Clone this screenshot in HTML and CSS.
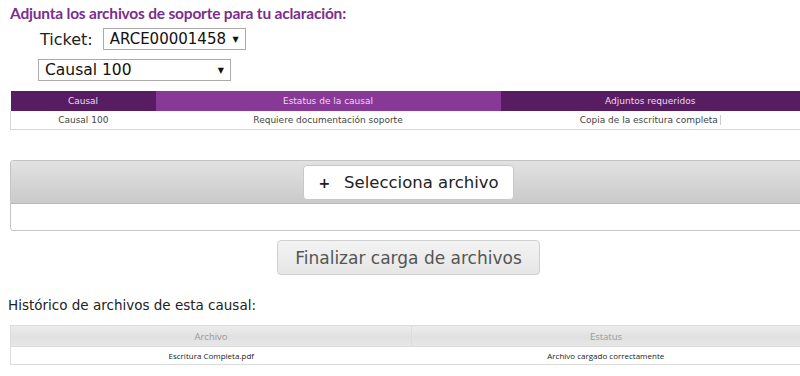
FILE: index.html
```html
<!DOCTYPE HTML>
<html>

<head>
    <meta charset="UTF-8">
    <meta name="viewport" content="width=device-width, initial-scale=1.0">
    <title>Adjuntar archivos</title>
    <link rel="stylesheet" href="styles.css">
</head>

<body>
    <div class="container">
        <h1 class="title">Adjunta los archivos de soporte para tu aclaración:</h1>

        <div class="ticket-row">
            <label>Ticket:</label>
            <div class="select select--ticket">ARCE00001458 <span class="arrow">▼</span></div>
        </div>
        <div class="select select--causal">Causal 100 <span class="arrow">▼</span></div>

        <table class="grid grid--causal">
            <tr>
                <th class="dark col-causal">Causal</th>
                <th class="light col-estatus">Estatus de la causal</th>
                <th class="dark">Adjuntos requeridos</th>
            </tr>
            <tr>
                <td>Causal 100</td>
                <td>Requiere documentación soporte</td>
                <td>Copia de la escritura completa<span class="cursor"></span></td>
            </tr>
        </table>

        <div class="upload">
            <div class="upload__bar">
                <button class="btn btn--select"><span class="plus">+</span>Selecciona archivo</button>
            </div>
            <div class="upload__list"></div>
        </div>

        <div class="finish">
            <button class="btn btn--finish">Finalizar carga de archivos</button>
        </div>

        <p class="history">Histórico de archivos de esta causal:</p>

        <table class="grid grid--history">
            <tr>
                <th class="col-archivo">Archivo</th>
                <th>Estatus</th>
            </tr>
            <tr>
                <td>Escritura Completa.pdf</td>
                <td>Archivo cargado correctamente</td>
            </tr>
        </table>
    </div>
</body>

</html>
```

FILE: styles.css
```css
body {
    margin: 0;
    font-family: "DejaVu Sans", Verdana, sans-serif;
    color: #333;
    background: #fff;
    overflow: hidden;
}

.container {
    padding-left: 10px;
    width: 800px;
}

.title {
    margin: 0;
    padding-top: 4px;
    font-family: Lato, sans-serif;
    font-weight: 700;
    font-size: 15.5px;
    color: #7b2e8e;
    letter-spacing: -0.2px;
    height: 24px;
}

.ticket-row {
    display: flex;
    align-items: center;
    margin-left: 30px;
    height: 22px;
}

.ticket-row label {
    font-size: 16px;
    color: #222;
    margin-right: 10px;
}

.select {
    display: flex;
    align-items: center;
    justify-content: space-between;
    box-sizing: border-box;
    border: 1px solid #aaa;
    height: 22px;
    padding: 0 6px 0 6px;
    font-size: 15px;
    color: #111;
}

.select .arrow {
    font-size: 8px;
    margin-left: 6px;
}

.select--ticket {
    width: 143px;
}

.select--causal {
    width: 193px;
    margin: 9px 0 0 28px;
    font-size: 15.5px;
}

.grid {
    border-collapse: collapse;
    width: 790px;
    table-layout: fixed;
    font-size: 9px;
}

.grid th,
.grid td {
    text-align: center;
    padding: 0;
    font-weight: normal;
}

.grid--causal {
    margin-top: 10px;
}

.grid--causal th {
    height: 20px;
    color: #e9dcec;
}

.grid--causal .dark {
    background: #581c62;
}

.grid--causal .light {
    background: #883897;
}

.col-causal {
    width: 145px;
}

.col-estatus {
    width: 345px;
}

.grid--causal td {
    height: 18px;
    border-bottom: 1px solid #d6d6d6;
    color: #444;
}

.grid--causal tr td:first-child {
    border-left: 1px solid #d6d6d6;
}

.cursor {
    display: inline-block;
    width: 1px;
    height: 10px;
    background: #ccc;
    margin-left: 2px;
    vertical-align: middle;
}

.upload {
    margin-top: 30px;
    border: 1px solid #c4c4c4;
    border-right: none;
    border-radius: 4px 0 0 4px;
    width: 790px;
    overflow: hidden;
}

.upload__bar {
    height: 42px;
    background: linear-gradient(#e2e2e2, #cacaca);
    border-bottom: 1px solid #b9b9b9;
    display: flex;
    align-items: center;
    padding-left: 292px;
}

.upload__list {
    height: 26px;
    background: #fff;
}

.btn {
    font-family: "DejaVu Sans", Verdana, sans-serif;
    cursor: pointer;
}

.btn--select {
    height: 35px;
    width: 211px;
    background: #fff;
    border: 1px solid #c8c8c8;
    border-radius: 4px;
    font-size: 16.5px;
    color: #222;
    padding: 0;
}

.plus {
    font-weight: bold;
    font-size: 14px;
    margin-right: 14px;
}

.finish {
    display: flex;
    padding-left: 267px;
    margin-top: 9px;
}

.btn--finish {
    height: 35px;
    width: 263px;
    background: linear-gradient(#f3f3f3, #e6e6e6);
    border: 1px solid #cfcfcf;
    border-radius: 4px;
    font-size: 17px;
    color: #555;
    padding: 0;
}

.history {
    margin: 22px 0 0 -2px;
    font-size: 13.5px;
    color: #222;
    height: 16px;
}

.grid--history {
    margin-top: 12px;
    font-family: "Open Sans", sans-serif;
}

.col-archivo {
    width: 400px;
}

.grid--history th {
    height: 20px;
    color: #999;
    background: linear-gradient(#ececec, #e0e0e0 55%, #e8e8e8);
    border: 1px solid #dcdcdc;
    border-right: none;
    font-size: 9.5px;
}

.grid--history td {
    height: 17px;
    color: #222;
    border-bottom: 1px solid #dcdcdc;
    font-size: 8px;
}

.grid--history tr td:first-child {
    border-left: 1px solid #dcdcdc;
}
```
